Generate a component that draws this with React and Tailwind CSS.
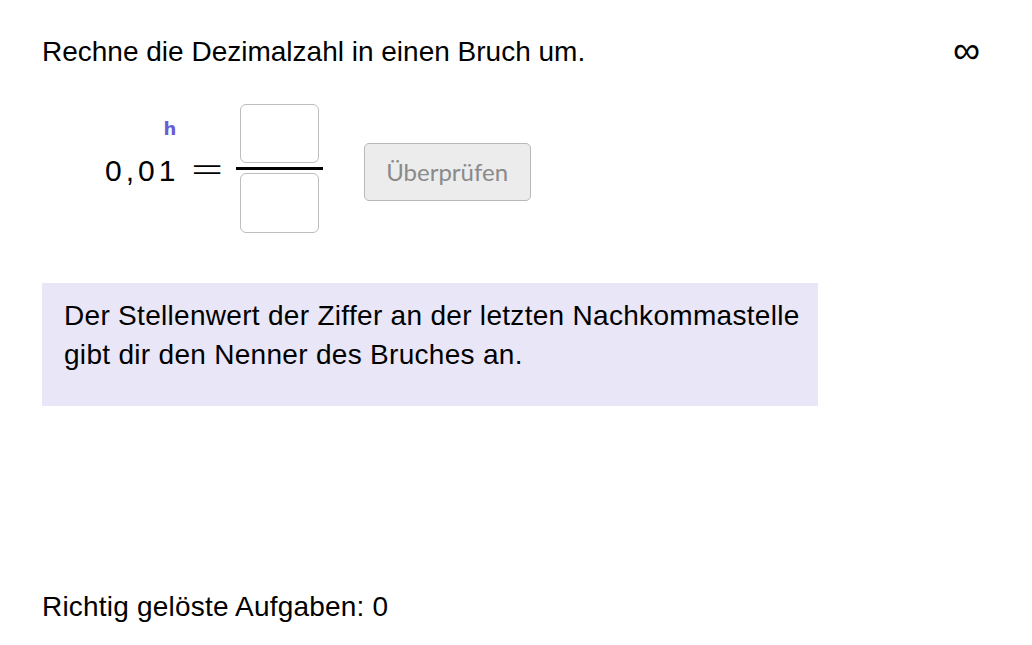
export default function App() {
  const sans = { fontFamily: '"Liberation Sans", Arial, sans-serif' };
  const math = { fontFamily: '"DejaVu Sans", sans-serif' };
  return (
    <div className="w-[1032px] h-[645px] bg-white text-black relative" style={sans}>
      <div className="flex flex-col pl-[42px] pr-[52px] pt-[34px] h-full">
        <div className="flex justify-between items-center h-[36px]">
          <div className="text-[28px] leading-[36px] whitespace-nowrap">Rechne die Dezimalzahl in einen Bruch um.</div>
          <div className="text-[38px] leading-[36px] mt-[-4px] font-extralight" style={math}>∞</div>
        </div>
        <div className="flex items-center mt-[34px] pl-[63px]">
          <div className="relative text-[30px] leading-none mt-[4px] flex">
            <span className="tracking-[4px]">0,0</span>
            <span>1</span>
            <span
              className="absolute right-[-1px] top-[-36px] text-[18px] font-bold text-[#6a5bd6]"
              style={math}
            >
              h
            </span>
          </div>
          <div className="text-[42px] leading-none ml-[14px] font-extralight" style={math}>=</div>
          <div className="flex flex-col items-center ml-[11px]">
            <div className="w-[79px] h-[59px] border border-[#bdbdbd] rounded-[6px] bg-white"></div>
            <div className="w-[87px] h-[3px] bg-black mt-[4px] mb-[3px]"></div>
            <div className="w-[79px] h-[60px] border border-[#bdbdbd] rounded-[6px] bg-white"></div>
          </div>
          <button
            className="ml-[41px] w-[167px] h-[58px] border border-[#b8b8b8] rounded-[5px] bg-[#ececec] text-[#8a8a8a] text-[24px] mt-[7px]"
            style={{ fontFamily: 'Lato, "Open Sans", sans-serif' }}
          >
            Überprüfen
          </button>
        </div>
        <div className="mt-[50px] w-[776px] h-[123px] bg-[#e9e6f7] px-[22px] pt-[13px] text-[28px] leading-[39px] tracking-[0.3px] whitespace-nowrap">
          Der Stellenwert der Ziffer an der letzten Nachkommastelle<br />gibt dir den Nenner des Bruches an.
        </div>
        <div className="mt-auto mb-[20px] text-[28px] leading-[36px] tracking-[0.2px]">Richtig gelöste Aufgaben: 0</div>
      </div>
    </div>
  );
}
